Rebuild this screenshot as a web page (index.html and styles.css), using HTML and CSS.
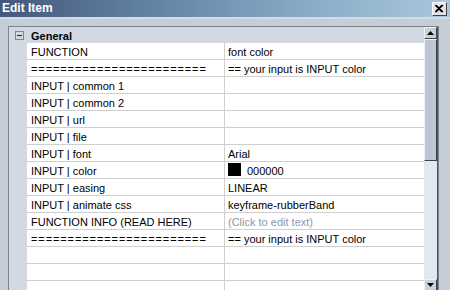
FILE: index.html
```html
<!DOCTYPE html>
<html lang="en">
<head>
  <meta charset="UTF-8" />
  <title>Edit Item</title>
  <link rel="stylesheet" href="styles.css">
</head>
<body>
  <div class="window">
    <div class="titlebar">
      <span class="title">Edit Item</span>
      <div class="close-btn">
        <svg width="9" height="8" viewBox="0 0 9 8">
          <path d="M1 0 L8 7 M0 0 L7 7 M8 0 L1 7 M7 0 L0 7" stroke="#000" stroke-width="1.2" />
        </svg>
      </div>
    </div>

    <div class="content">
      <div class="panel">
        <div class="grid">
          <div class="group-row">
            <span class="toggle">
              <svg width="9" height="9" viewBox="0 0 9 9">
                <rect x="0.5" y="0.5" width="8" height="8" fill="none" stroke="#7f8791" />
                <path d="M2 4.5 H7" stroke="#222" />
              </svg>
            </span>
            <span class="group-label">General</span>
          </div>

          <div class="row"><div class="name">FUNCTION</div><div class="value">font color</div></div>
          <div class="row"><div class="name sep">========================</div><div class="value">== your input is INPUT color</div></div>
          <div class="row"><div class="name">INPUT | common 1</div><div class="value"></div></div>
          <div class="row"><div class="name">INPUT | common 2</div><div class="value"></div></div>
          <div class="row"><div class="name">INPUT | url</div><div class="value"></div></div>
          <div class="row"><div class="name">INPUT | file</div><div class="value"></div></div>
          <div class="row"><div class="name">INPUT | font</div><div class="value">Arial</div></div>
          <div class="row"><div class="name">INPUT | color</div><div class="value"><span class="swatch"></span>000000</div></div>
          <div class="row"><div class="name">INPUT | easing</div><div class="value">LINEAR</div></div>
          <div class="row"><div class="name">INPUT | animate css</div><div class="value">keyframe-rubberBand</div></div>
          <div class="row"><div class="name">FUNCTION INFO (READ HERE)</div><div class="value placeholder">(Click to edit text)</div></div>
          <div class="row"><div class="name sep">========================</div><div class="value">== your input is INPUT color</div></div>
          <div class="row"><div class="name"></div><div class="value"></div></div>
          <div class="row"><div class="name"></div><div class="value"></div></div>
          <div class="row"><div class="name"></div><div class="value"></div></div>
        </div>

        <div class="scrollbar">
          <div class="scroll-btn">
            <svg width="7" height="4" viewBox="0 0 7 4"><path d="M3.5 0 L7 4 L0 4 Z" fill="#000" /></svg>
          </div>
          <div class="scroll-thumb"></div>
          <div class="scroll-track"></div>
          <div class="scroll-btn">
            <svg width="7" height="4" viewBox="0 0 7 4"><path d="M0 0 L7 0 L3.5 4 Z" fill="#000" /></svg>
          </div>
        </div>
      </div>
    </div>
  </div>
</body>
</html>
```

FILE: styles.css
```css
body {
  margin: 0;
  font-family: "Liberation Sans", Arial, sans-serif;
  font-size: 11px;
  color: #000;
  background: #c5cdd6;
  overflow: hidden;
}

.window {
  height: 290px;
  display: flex;
  flex-direction: column;
}

.titlebar {
  height: 17px;
  flex-shrink: 0;
  display: flex;
  align-items: center;
  justify-content: space-between;
  padding: 0 3px 0 2px;
  background: linear-gradient(to right, #44587a 0%, #5f7ea0 30%, #86a8c4 65%, #a9c8dd 100%);
  border-bottom: 2px solid #d3dbe3;
}

.title {
  color: #fff;
  font-weight: bold;
  font-size: 12px;
  line-height: 17px;
}

.close-btn {
  width: 13px;
  height: 12px;
  display: flex;
  align-items: center;
  justify-content: center;
  background: #dfe3e8;
  border: 1px solid;
  border-color: #fff #404040 #404040 #fff;
}

.content {
  flex: 1;
  padding: 7px 11px 0 8px;
  min-height: 0;
}

.panel {
  height: 100%;
  display: flex;
  border: 1px solid #7b8692;
  border-bottom: none;
  background: #d2d9e1;
}

.grid {
  flex: 1;
  display: flex;
  flex-direction: column;
}

.group-row {
  height: 17px;
  display: flex;
  align-items: center;
  padding-left: 6px;
}

.toggle {
  width: 9px;
  height: 9px;
  display: flex;
  margin-top: 1px;
}

.group-label {
  font-weight: bold;
  margin-left: 7px;
  line-height: 14px;
  padding-top: 2px;
}

.row {
  display: flex;
  height: 17px;
  margin-left: 18px;
  background: #fff;
  border-bottom: 1px solid #cfcfcf;
  box-sizing: border-box;
  flex-shrink: 0;
}

.name,
.value {
  line-height: 14px;
  padding-top: 2px;
  white-space: nowrap;
  overflow: hidden;
}

.name {
  width: 198px;
  padding-left: 4px;
  box-sizing: border-box;
  border-right: 1px solid #cfcfcf;
}

.value {
  flex: 1;
  padding-left: 3px;
  display: flex;
  align-items: flex-start;
}

.sep {
  letter-spacing: 0.9px;
}

.placeholder {
  color: #8d97a6;
}

.swatch {
  display: inline-block;
  width: 13px;
  height: 13px;
  background: #000;
  margin: -1px 6px 0 0;
}

.scrollbar {
  width: 13px;
  display: flex;
  flex-direction: column;
  border-right: 1px solid #4a525c;
}

.scroll-btn {
  height: 12px;
  flex-shrink: 0;
  display: flex;
  align-items: center;
  justify-content: center;
  background: #c9d2dc;
  border: 1px solid;
  border-color: #eef2f6 #3c444e #3c444e #eef2f6;
  box-sizing: border-box;
}

.scroll-thumb {
  height: 122px;
  background: #bdc7d3;
  border: 1px solid;
  border-color: #eef2f6 #3c444e #3c444e #eef2f6;
  box-sizing: border-box;
}

.scroll-track {
  flex: 1;
  background: #e3e8ee;
}
```
